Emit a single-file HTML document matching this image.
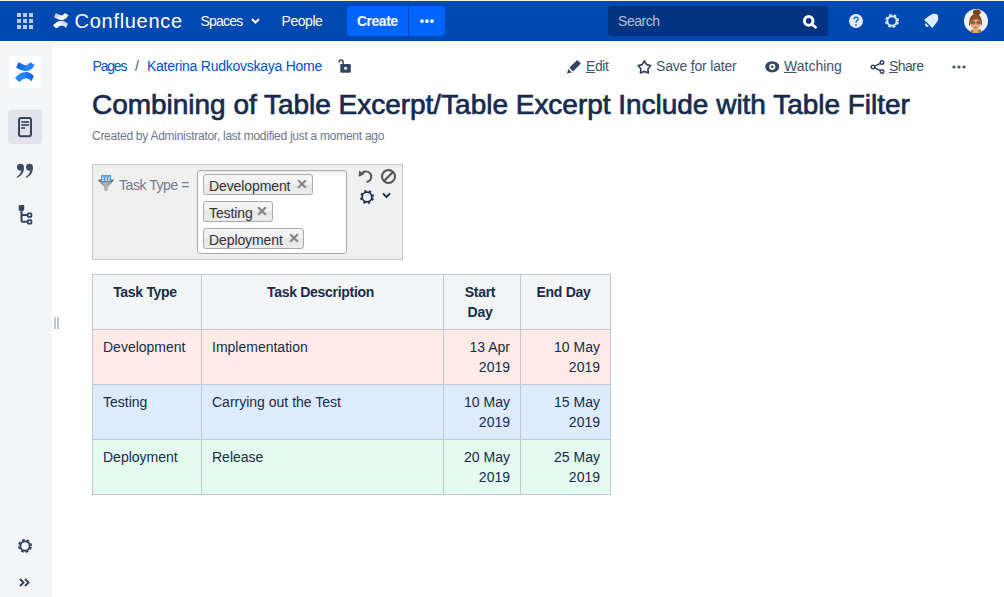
<!DOCTYPE html>
<html><head><meta charset="utf-8">
<style>
*{box-sizing:border-box;margin:0;padding:0}
html,body{width:1004px;height:597px;overflow:hidden;background:#fff}
body{font-family:"Liberation Sans",sans-serif;color:#172B4D;position:relative}
.a{position:absolute;white-space:nowrap}
#topline{left:0;top:0;width:1004px;height:1px;background:#F6EFE6}
#nav{left:0;top:1px;width:1004px;height:40px;background:#0049B0}
#nav .t{color:#fff;font-size:14px;line-height:20px}
#below{left:0;top:41px;width:1004px;height:1px;background:#FFFEF8}
#side{left:0;top:42px;width:52px;height:555px;background:#F4F5F7}
.crumb{font-size:14px;line-height:20px;color:#0052CC}
.act{font-size:14px;line-height:20px;color:#42526E}
#title{font-size:28px;line-height:32px;color:#172B4D;-webkit-text-stroke:0.7px #172B4D}
#meta{font-size:12px;line-height:16px;color:#6B778C}
#filter{left:92px;top:164px;width:311px;height:96px;background:#F0F0F0;border:1px solid #C8C8C8}
#fbox{left:197px;top:170px;width:150px;height:84px;background:#fff;border:1px solid #AAAAAA;border-radius:3px;box-shadow:inset 0 4px 5px -2px rgba(0,0,0,0.1)}
.tag{position:absolute;left:203px;height:21px;border:1px solid #AAAAAA;border-radius:3px;background:linear-gradient(#F6F6F6 0%,#F0F0F0 45%,#E6E6E6 55%,#EDEDED 100%);font-size:14px;line-height:19px;color:#333;padding-left:5px;padding-top:1.5px;letter-spacing:-0.1px}
.tag svg{position:absolute;top:4px}
table{position:absolute;left:92px;top:274px;border-collapse:collapse;font-size:14px;line-height:20px}
td,th{border:1px solid #C1C7D0;padding:7px 10px;vertical-align:top;text-align:left}
th{background:#F4F5F7;font-weight:bold;text-align:center;color:#172B4D;padding:7px 12px 7px 8px;letter-spacing:-0.3px}
td{color:#172B4D}
.r{text-align:right}
tr.red td{background:#FFEBE6}
tr.blue td{background:#DEEBFF}
tr.green td{background:#E3FCEF}
</style></head><body>
<div class="a" id="topline"></div>
<div class="a" id="nav">
  <!-- app grid -->
  <svg class="a" style="left:17px;top:12px" width="16" height="16" viewBox="0 0 16 16" fill="#B8CBEA">
    <rect x="0" y="0" width="4" height="4"/><rect x="6" y="0" width="4" height="4"/><rect x="12" y="0" width="4" height="4"/>
    <rect x="0" y="6" width="4" height="4"/><rect x="6" y="6" width="4" height="4"/><rect x="12" y="6" width="4" height="4"/>
    <rect x="0" y="12" width="4" height="4"/><rect x="6" y="12" width="4" height="4"/><rect x="12" y="12" width="4" height="4"/>
  </svg>
  <!-- confluence logo white -->
  <svg class="a" style="left:53px;top:10.8px" width="16.6" height="16.6" viewBox="3 2 21 21">
    <defs><linearGradient id="wg1" x1="0" y1="0" x2="1" y2="0.6"><stop offset="0" stop-color="#fff" stop-opacity="0.62"/><stop offset="0.75" stop-color="#fff"/></linearGradient>
    <linearGradient id="wg2" x1="0" y1="0.6" x2="1" y2="0"><stop offset="0.25" stop-color="#fff"/><stop offset="1" stop-color="#fff" stop-opacity="0.7"/></linearGradient></defs>
    <path fill="url(#wg1)" d="M4.4,8 L6.5,3.3 Q10.5,5.5 14.4,6.5 Q16.5,5 18.3,3.3 L22.6,6 Q21,9 18.7,10.5 Q16,12.2 13,12 Q8.5,11.5 4.4,8.7Z"/>
    <path fill="url(#wg2)" d="M3,19.2 L7.4,22.9 Q10.5,19.5 14.4,19.2 Q17.5,19.8 19.6,22.2 L21.8,17 Q18.5,13.5 15.2,13 Q11,12.8 8,14.5 Q5,16.5 3,19.2Z"/>
  </svg>
  <div class="a t" style="left:74.6px;top:6px;font-size:20px;line-height:28px;letter-spacing:0.7px">Confluence</div>
  <div class="a t" style="left:200.5px;top:10px;letter-spacing:-0.8px">Spaces</div>
  <svg class="a" style="left:251px;top:17px" width="9" height="6" viewBox="0 0 9 6"><path d="M1,1 L4.5,4.5 L8,1" stroke="#fff" stroke-width="2" fill="none"/></svg>
  <div class="a t" style="left:281.5px;top:10px;letter-spacing:-0.45px">People</div>
  <div class="a" style="left:347px;top:5px;width:98px;height:30px;background:#0065FF;border-radius:3px"></div>
  <div class="a" style="left:408px;top:5px;width:1px;height:30px;background:#0049B0"></div>
  <div class="a t" style="left:357px;top:10px;font-weight:bold;letter-spacing:-0.5px">Create</div>
  <svg class="a" style="left:420px;top:18px" width="14" height="5" viewBox="0 0 14 5" fill="#fff"><circle cx="2" cy="2.1" r="1.9"/><circle cx="7" cy="2.1" r="1.9"/><circle cx="12" cy="2.1" r="1.9"/></svg>
  <div class="a" style="left:608px;top:5px;width:220px;height:30px;background:#003380;border-radius:3px"></div>
  <div class="a t" style="left:618px;top:10px;color:#B3C0D8;letter-spacing:-0.45px">Search</div>
  <svg class="a" style="left:802px;top:13px" width="17" height="17" viewBox="0 0 17 17"><circle cx="6.7" cy="6.9" r="4.3" stroke="#fff" stroke-width="3" fill="none"/><path d="M10.8,11 L13.6,13.3" stroke="#fff" stroke-width="2.6" stroke-linecap="round"/></svg>
  <!-- help -->
  <svg class="a" style="left:849px;top:12.8px" width="14" height="14" viewBox="0 0 14 14"><circle cx="7" cy="7" r="7" fill="#DEEBFF"/><path d="M4.9,5.2 Q4.9,3 7,3 Q9.1,3 9.1,4.9 Q9.1,6.1 7.9,6.8 Q7,7.3 7,8.6" stroke="#0052CC" stroke-width="1.25" fill="none"/><circle cx="7" cy="10.8" r="0.85" fill="#0052CC"/></svg>
  <!-- gear -->
  <svg class="a" style="left:885px;top:12.8px" width="14" height="14" viewBox="0 0 14 14"><circle cx="7" cy="7" r="4.70" stroke="#DEEBFF" stroke-width="2.00" fill="none"/><circle cx="7" cy="7" r="6.20" stroke="#DEEBFF" stroke-width="1.60" fill="none" stroke-dasharray="2.80 2.069" stroke-dashoffset="-1.035"/></svg>
  <!-- bell -->
  <svg class="a" style="left:918px;top:8.6px" width="26" height="22" viewBox="0 0 26 22"><g fill="#DEEBFF"><path d="M6,9.7 L14.5,18.1 Q17.5,14 20.1,10.6 Q20.6,6.5 19.6,4.4 Q17,3.6 14.3,4 Q10,6.5 6,9.7Z"/><path d="M7.6,13 A1.9,1.9 0 0 0 10.8,16.2Z"/></g></svg>
  <!-- avatar -->
  <svg class="a" style="left:964px;top:7.8px" width="24" height="24" viewBox="0 0 24 24">
    <defs><clipPath id="avc"><circle cx="12" cy="12" r="12"/></clipPath></defs>
    <circle cx="12" cy="12" r="12" fill="#F3F3F3"/>
    <g clip-path="url(#avc)">
    <path d="M7.5,20.5 L16.5,20.5 L18.5,24 L5.5,24Z" fill="#C9624F"/>
    <path d="M9.8,19 L13.6,19 L14.6,24 L8.8,24Z" fill="#E7A96E"/>
    <path d="M5,17.5 Q4.5,5 11.8,5 Q18.5,5 18,17 Q16,12 11.8,9 Q7.5,12 5,17.5Z" fill="#8A4B1E"/>
    <ellipse cx="12.8" cy="3.2" rx="4" ry="2.8" fill="#7E4419"/>
    <ellipse cx="11.7" cy="14.8" rx="5.2" ry="5.6" fill="#E9AE7C"/>
    <path d="M6.3,12.5 Q11.8,8.5 17.3,12 L17.3,10.5 Q11.8,6.8 6.3,11Z" fill="#8A4B1E"/>
    <rect x="6.3" y="11.6" width="5" height="3.8" rx="1.5" fill="#D9534F"/>
    <rect x="12.2" y="11.6" width="5" height="3.8" rx="1.5" fill="#D9534F"/>
    <ellipse cx="8.8" cy="13.5" rx="1.8" ry="1.1" fill="#2F6F86"/>
    <ellipse cx="14.7" cy="13.5" rx="1.8" ry="1.1" fill="#2F6F86"/>
    <path d="M10,17.7 L13.3,17.7 Q12.8,19.2 11.6,19.2 Q10.5,19.2 10,17.7Z" fill="#8B2A2A"/>
    <rect x="10.5" y="17.7" width="2.3" height="0.6" fill="#fff"/>
    </g>
  </svg>
</div>
<div class="a" id="below"></div>
<div class="a" id="side">
  <div class="a" style="left:9px;top:14px;width:32px;height:32px;background:#fff"></div>
  <svg class="a" style="left:12px;top:17px" width="26" height="26" viewBox="0 0 26 26">
    <defs><linearGradient id="lg1" x1="0" y1="0" x2="1" y2="0.3"><stop offset="0" stop-color="#0052CC"/><stop offset="0.7" stop-color="#2684FF"/><stop offset="1" stop-color="#2278F0"/></linearGradient>
    <linearGradient id="lg2" x1="0" y1="0.3" x2="1" y2="0"><stop offset="0" stop-color="#2684FF"/><stop offset="0.4" stop-color="#2684FF"/><stop offset="1" stop-color="#0052CC"/></linearGradient></defs>
    <path fill="url(#lg1)" d="M4.4,8 L6.5,3.3 Q10.5,5.5 14.4,6.5 Q16.5,5 18.3,3.3 L22.6,6 Q21,9 18.7,10.5 Q16,12.2 13,12 Q8.5,11.5 4.4,8.7Z"/>
    <path fill="url(#lg2)" d="M3,19.2 L7.4,22.9 Q10.5,19.5 14.4,19.2 Q17.5,19.8 19.6,22.2 L21.8,17 Q18.5,13.5 15.2,13 Q11,12.8 8,14.5 Q5,16.5 3,19.2Z"/>
  </svg>
  <div class="a" style="left:8px;top:68px;width:34px;height:34px;background:#E1E3E8;border-radius:3px"></div>
  <svg class="a" style="left:17px;top:75px" width="16" height="21" viewBox="0 0 16 21">
    <rect x="2" y="1" width="12" height="18.2" rx="2" fill="none" stroke="#344563" stroke-width="2"/>
    <rect x="4.2" y="4.2" width="7.8" height="1.6" fill="#344563"/><rect x="4.2" y="7.2" width="7.8" height="1.6" fill="#344563"/><rect x="4.2" y="10.2" width="3.8" height="1.6" fill="#344563"/>
  </svg>
  <!-- quote -->
  <svg class="a" style="left:12px;top:116px" width="26" height="24" viewBox="0 0 26 24" fill="#3B4A66"><circle cx="8.5" cy="9.3" r="3.45"/><path d="M11.95,9.3 Q12.2,16.8 5,19.9 L4.7,19 Q9,16 9.3,12.2 Z"/><circle cx="17.5" cy="9.3" r="3.45"/><path d="M20.95,9.3 Q21.2,16.8 14,19.9 L13.7,19 Q18,16 18.3,12.2 Z"/></svg>
  <!-- tree -->
  <svg class="a" style="left:14px;top:158px" width="24" height="28" viewBox="0 0 24 28" fill="none" stroke="#344563">
    <rect x="4.7" y="5.1" width="5.5" height="5.6" rx="1" fill="#344563" stroke="none"/>
    <path d="M7.5,10 L7.5,20.3 Q7.5,21.8 9,21.8 L13.5,21.8 M7.5,15.1 L13.5,15.1" stroke-width="2"/>
    <rect x="13.8" y="13.3" width="3.6" height="3.5" rx="0.6" stroke-width="1.8"/>
    <rect x="13.8" y="20.1" width="3.6" height="3.5" rx="0.6" stroke-width="1.8"/>
  </svg>
  <!-- gear bottom -->
  <svg class="a" style="left:17.5px;top:497px" width="14" height="14" viewBox="0 0 14 14"><circle cx="7" cy="7" r="4.70" stroke="#344563" stroke-width="2.00" fill="none"/><circle cx="7" cy="7" r="6.20" stroke="#344563" stroke-width="1.60" fill="none" stroke-dasharray="2.80 2.069" stroke-dashoffset="-1.035"/></svg>
  <!-- double chevron -->
  <svg class="a" style="left:19px;top:536px" width="11" height="9" viewBox="0 0 11 9" fill="none" stroke="#344563" stroke-width="2"><path d="M1,1 L4.5,4.5 L1,8 M6,1 L9.5,4.5 L6,8"/></svg>
</div>
<!-- resize handle -->
<div class="a" style="left:54px;top:317px;width:2px;height:12px;background:#C1C7D0"></div>
<div class="a" style="left:57px;top:317px;width:2px;height:12px;background:#C1C7D0"></div>

<!-- breadcrumbs -->
<div class="a crumb" style="left:92.5px;top:56px;letter-spacing:-1.2px">Pages</div>
<div class="a crumb" style="left:135px;top:56px;color:#42526E">/</div>
<div class="a crumb" style="left:147px;top:56px;letter-spacing:-0.25px">Katerina Rudkovskaya Home</div>
<svg class="a" style="left:332px;top:55px" width="26" height="22" viewBox="0 0 26 22"><path d="M7.1,7.6 L7.1,6.9 A2,2 0 0 1 11.1,6.9 L11.1,9.8" stroke="#344563" stroke-width="1.5" fill="none"/><rect x="8.3" y="9" width="10.5" height="8.8" rx="1.3" fill="#344563"/><circle cx="13.6" cy="13.3" r="1.5" fill="#fff"/></svg>

<!-- actions -->
<svg class="a" style="left:562px;top:56px" width="22" height="22" viewBox="0 0 22 22"><path d="M7.3,11.8 L15.2,4 L18.9,7.6 L11,15.4Z" fill="#344563"/><path d="M6.4,12.9 L9.9,16.4 L5,17.6Z" fill="#344563"/></svg>
<div class="a act" style="left:586px;top:56px;letter-spacing:-0.4px"><u>E</u>dit</div>
<svg class="a" style="left:632px;top:56px" width="24" height="22" viewBox="0 0 24 22"><path d="M12.40,5.00 L14.60,8.57 L18.68,9.56 L15.97,12.76 L16.28,16.94 L12.40,15.35 L8.52,16.94 L8.83,12.76 L6.12,9.56 L10.20,8.57Z" fill="none" stroke="#344563" stroke-width="1.7" stroke-linejoin="round"/></svg>
<div class="a act" style="left:656px;top:56px;letter-spacing:-0.2px">Save <u>f</u>or later</div>
<svg class="a" style="left:760px;top:56px" width="24" height="22" viewBox="0 0 24 22"><ellipse cx="12.2" cy="10.8" rx="7" ry="5.6" fill="#344563"/><circle cx="12.3" cy="10.8" r="3.1" fill="#fff"/><circle cx="12.3" cy="10.8" r="1.3" fill="#344563"/></svg>
<div class="a act" style="left:784px;top:56px"><u>W</u>atching</div>
<svg class="a" style="left:870px;top:60px" width="15" height="14" viewBox="0 0 15 14" fill="none" stroke="#344563" stroke-width="1.45"><circle cx="12" cy="2.5" r="1.8"/><circle cx="3" cy="7" r="1.8"/><circle cx="12" cy="11.5" r="1.8"/><path d="M4.6,6.2 L10.4,3.3 M4.6,7.8 L10.4,10.7"/></svg>
<div class="a act" style="left:889px;top:56px;letter-spacing:-0.6px"><u>S</u>hare</div>
<svg class="a" style="left:952px;top:65px" width="14" height="4" viewBox="0 0 14 4" fill="#42526E"><circle cx="2" cy="2" r="1.6"/><circle cx="7" cy="2" r="1.6"/><circle cx="12" cy="2" r="1.6"/></svg>

<!-- title -->
<div class="a" id="title" style="left:92px;top:89px;letter-spacing:-0.02px">Combining of Table Excerpt/Table Excerpt Include with Table Filter</div>
<div class="a" id="meta" style="left:92px;top:128px;letter-spacing:-0.27px">Created by Administrator, last modified just a moment ago</div>

<!-- filter -->
<div class="a" id="filter"></div>
<svg class="a" style="left:94px;top:170px" width="26" height="25" viewBox="0 0 26 25">
  <defs><linearGradient id="fg" x1="0" y1="0" x2="1" y2="0"><stop offset="0" stop-color="#7A7A7A"/><stop offset="0.5" stop-color="#B5B5B5"/><stop offset="1" stop-color="#7A7A7A"/></linearGradient></defs>
  <path d="M4,10.5 Q4,9 12,9 Q20,9 20,10.5 L13.8,17 L13.8,20 Q13.8,20.9 12,20.9 Q10.2,20.9 10.2,20 L10.2,17Z" fill="url(#fg)"/>
  <ellipse cx="12" cy="10.5" rx="7.5" ry="1.3" fill="#6E6E6E"/>
  <rect x="7" y="5" width="10" height="6" fill="#4A90E2"/>
  <rect x="7.6" y="5.6" width="8.8" height="1.2" fill="#7DB0EE"/>
  <g fill="#fff"><rect x="7.8" y="7.6" width="2.2" height="1.1"/><rect x="10.9" y="7.6" width="2.2" height="1.1"/><rect x="14" y="7.6" width="2.2" height="1.1"/>
  <rect x="7.8" y="9.6" width="2.2" height="1.1"/><rect x="10.9" y="9.6" width="2.2" height="1.1"/><rect x="14" y="9.6" width="2.2" height="1.1"/></g>
</svg>
<div class="a" style="left:119px;top:175px;font-size:14px;line-height:20px;color:#707A8A;letter-spacing:-0.45px">Task Type =</div>
<div class="a" id="fbox"></div>
<div class="tag" style="top:174px;width:110px">Development<svg style="left:93px" width="10" height="10" viewBox="0 0 10 10"><path d="M1.2,1.2 L8.8,8.8 M8.8,1.2 L1.2,8.8" stroke="#888" stroke-width="2.3"/></svg></div>
<div class="tag" style="top:201px;width:70px">Testing<svg style="left:53px" width="10" height="10" viewBox="0 0 10 10"><path d="M1.2,1.2 L8.8,8.8 M8.8,1.2 L1.2,8.8" stroke="#888" stroke-width="2.3"/></svg></div>
<div class="tag" style="top:228px;width:101px">Deployment<svg style="left:85px" width="10" height="10" viewBox="0 0 10 10"><path d="M1.2,1.2 L8.8,8.8 M8.8,1.2 L1.2,8.8" stroke="#888" stroke-width="2.3"/></svg></div>
<!-- undo -->
<svg class="a" style="left:358px;top:169px" width="16" height="15" viewBox="0 0 16 15"><path d="M3.2,5.5 A5.3,5.3 0 1 1 8.5,13" stroke="#555" stroke-width="1.9" fill="none"/><path d="M0.6,7.8 L1.2,1.6 L6.4,5.2Z" fill="#555"/></svg>
<svg class="a" style="left:380px;top:168px" width="17" height="17" viewBox="0 0 17 17"><circle cx="8.5" cy="8.5" r="6.5" stroke="#555" stroke-width="2.1" fill="none"/><path d="M4,13 L13,4" stroke="#555" stroke-width="2.1"/></svg>
<svg class="a" style="left:359.5px;top:189.8px" width="14" height="14" viewBox="0 0 14 14"><circle cx="7" cy="7" r="4.85" stroke="#172B4D" stroke-width="1.70" fill="none"/><circle cx="7" cy="7" r="6.20" stroke="#172B4D" stroke-width="1.60" fill="none" stroke-dasharray="2.30 2.569" stroke-dashoffset="-1.285"/></svg>
<svg class="a" style="left:382px;top:192px" width="9" height="7" viewBox="0 0 9 7"><path d="M1,1.5 L4.5,5 L8,1.5" stroke="#172B4D" stroke-width="1.8" fill="none"/></svg>

<!-- table -->
<table>
<tr><th style="width:109px">Task Type</th><th style="width:242px">Task Description</th><th style="width:77px">Start<br>Day</th><th style="width:90px">End Day</th></tr>
<tr class="red"><td>Development</td><td>Implementation</td><td class="r">13 Apr<br>2019</td><td class="r">10 May<br>2019</td></tr>
<tr class="blue"><td>Testing</td><td>Carrying out the Test</td><td class="r">10 May<br>2019</td><td class="r">15 May<br>2019</td></tr>
<tr class="green"><td>Deployment</td><td>Release</td><td class="r">20 May<br>2019</td><td class="r">25 May<br>2019</td></tr>
</table>
</body></html>
